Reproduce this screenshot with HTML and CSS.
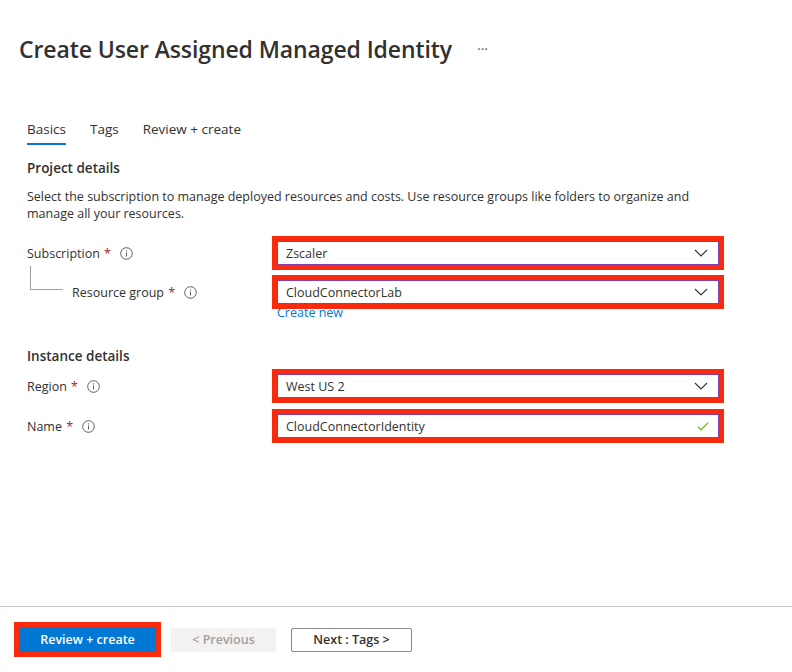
FILE: index.html
```html
<!DOCTYPE html>
<html>
<head>
<meta charset="utf-8">
<link rel="stylesheet" href="styles.css">
</head>
<body>
<div class="page">
  <main class="content">
    <header class="title-row">
      <h1 class="title">Create User Assigned Managed Identity</h1>
      <span class="more">···</span>
    </header>

    <nav class="tabs">
      <span class="tab active">Basics</span>
      <span class="tab">Tags</span>
      <span class="tab">Review + create</span>
    </nav>

    <h2 class="section">Project details</h2>
    <p class="desc">Select the subscription to manage deployed resources and costs. Use resource groups like folders to organize and manage all your resources.</p>

    <div class="row row-sub">
      <div class="label">Subscription <span class="req">*</span>
        <svg class="info" width="13" height="13" viewBox="0 0 13 13"><circle cx="6.5" cy="6.5" r="5.8" fill="none" stroke="#605e5c" stroke-width="1"/><rect x="6" y="5.5" width="1" height="4" fill="#605e5c"/><rect x="6" y="3.4" width="1" height="1.1" fill="#605e5c"/></svg>
      </div>
      <div class="field">
        <div class="input hl"><span>Zscaler</span>
          <svg class="chev" width="14" height="8" viewBox="0 0 14 8"><path d="M1 1 L7 7 L13 1" fill="none" stroke="#323130" stroke-width="1.1"/></svg>
        </div>
      </div>
    </div>

    <div class="row row-rg">
      <div class="label sub">Resource group <span class="req">*</span>
        <svg class="info" width="13" height="13" viewBox="0 0 13 13"><circle cx="6.5" cy="6.5" r="5.8" fill="none" stroke="#605e5c" stroke-width="1"/><rect x="6" y="5.5" width="1" height="4" fill="#605e5c"/><rect x="6" y="3.4" width="1" height="1.1" fill="#605e5c"/></svg>
      </div>
      <div class="field">
        <div class="input hl"><span>CloudConnectorLab</span>
          <svg class="chev" width="14" height="8" viewBox="0 0 14 8"><path d="M1 1 L7 7 L13 1" fill="none" stroke="#323130" stroke-width="1.1"/></svg>
        </div>
        <a class="link">Create new</a>
      </div>
    </div>

    <h2 class="section inst">Instance details</h2>

    <div class="row row-region">
      <div class="label">Region <span class="req">*</span>
        <svg class="info" width="13" height="13" viewBox="0 0 13 13"><circle cx="6.5" cy="6.5" r="5.8" fill="none" stroke="#605e5c" stroke-width="1"/><rect x="6" y="5.5" width="1" height="4" fill="#605e5c"/><rect x="6" y="3.4" width="1" height="1.1" fill="#605e5c"/></svg>
      </div>
      <div class="field">
        <div class="input hl"><span>West US 2</span>
          <svg class="chev" width="14" height="8" viewBox="0 0 14 8"><path d="M1 1 L7 7 L13 1" fill="none" stroke="#323130" stroke-width="1.1"/></svg>
        </div>
      </div>
    </div>

    <div class="row row-name">
      <div class="label">Name <span class="req">*</span>
        <svg class="info" width="13" height="13" viewBox="0 0 13 13"><circle cx="6.5" cy="6.5" r="5.8" fill="none" stroke="#605e5c" stroke-width="1"/><rect x="6" y="5.5" width="1" height="4" fill="#605e5c"/><rect x="6" y="3.4" width="1" height="1.1" fill="#605e5c"/></svg>
      </div>
      <div class="field">
        <div class="input hl"><span>CloudConnectorIdentity</span>
          <svg class="check" width="12" height="9" viewBox="0 0 12 9"><path d="M0.8 4.6 L4 7.8 L11.2 0.6" fill="none" stroke="#6bb700" stroke-width="1.2"/></svg>
        </div>
      </div>
    </div>
  </main>

  <footer class="footer">
    <button class="btn primary hl">Review + create</button>
    <button class="btn disabled">&lt; Previous</button>
    <button class="btn secondary">Next : Tags &gt;</button>
  </footer>
</div>
</body>
</html>
```

FILE: styles.css
```css
* { box-sizing: border-box; }

html, body {
  margin: 0;
  padding: 0;
  background: #ffffff;
}

body {
  font-family: "Segoe UI", "Open Sans", "Liberation Sans", sans-serif;
  color: #323130;
  font-size: 13px;
}

.page {
  height: 672px;
  display: flex;
  flex-direction: column;
}

.content {
  flex: 1;
  padding: 33px 0 0 27px;
}

.title-row {
  display: flex;
  align-items: center;
  margin-left: -8px;
  height: 32px;
}

.title {
  margin: 0;
  font-size: 23px;
  font-weight: 600;
  line-height: 32px;
  color: #323130;
  letter-spacing: -0.1px;
}

.more {
  margin-left: 25px;
  font-size: 14px;
  color: #605e5c;
  line-height: 32px;
}

.tabs {
  display: flex;
  gap: 24px;
  margin-top: 54px;
}

.tab {
  font-size: 13.5px;
  line-height: 20px;
  padding-bottom: 4px;
  border-bottom: 2px solid transparent;
  color: #323130;
}

.tab.active {
  border-bottom-color: #0078d4;
}

.section {
  margin: 13px 0 0;
  font-size: 13.5px;
  font-weight: 600;
  line-height: 20px;
}

.section.inst {
  margin-top: 25px;
}

.desc {
  margin: 10px 0 0;
  font-size: 12.5px;
  line-height: 17px;
  width: 700px;
}

.row {
  display: flex;
  align-items: flex-start;
}

.row-sub { margin-top: 19px; }
.row-rg { margin-top: 15px; }
.row-region { margin-top: 8px; }
.row-name { margin-top: 16px; }

.label {
  width: 250px;
  height: 24px;
  display: flex;
  align-items: center;
  font-size: 12.5px;
  white-space: pre;
}

.label.sub {
  position: relative;
  padding-left: 45px;
}

.label.sub::before {
  content: "";
  position: absolute;
  left: 3px;
  top: -14px;
  width: 32px;
  height: 23px;
  border-left: 1px solid #a19f9d;
  border-bottom: 1px solid #a19f9d;
}

.req {
  color: #a4262c;
  margin-left: 1px;
}

.info {
  margin-left: 9px;
}

.field {
  width: 442px;
}

.input {
  height: 24px;
  border: 1px solid #8a3fb0;
  display: flex;
  align-items: center;
  justify-content: space-between;
  padding: 0 9px 0 8px;
  font-size: 12.5px;
  background: #fff;
}

.hl {
  outline: 5px solid #fa2a0c;
}

.chev { margin-right: 1px; }

.link {
  display: block;
  margin-top: 1px;
  color: #0078d4;
  font-size: 12.5px;
  line-height: 16px;
}

.footer {
  border-top: 1px solid #c8c6c4;
  padding: 20px 19px;
  display: flex;
  align-items: center;
  gap: 15px;
}

.btn {
  font-family: inherit;
  font-size: 12.5px;
  font-weight: 600;
  height: 24px;
  padding: 0;
  border: 1px solid transparent;
  border-radius: 2px;
}

.primary {
  width: 137px;
  height: 25px;
  background: #0078d4;
  color: #ffffff;
  border-color: #0078d4;
  border-radius: 0;
}

.disabled {
  width: 105px;
  background: #f3f2f1;
  color: #a19f9d;
  border-color: #f3f2f1;
}

.secondary {
  width: 121px;
  background: #ffffff;
  color: #323130;
  border-color: #8a8886;
}
```
